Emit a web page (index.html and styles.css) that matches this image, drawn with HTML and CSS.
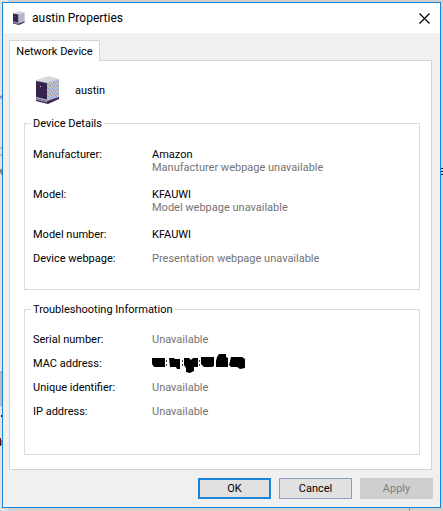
FILE: index.html
```html
<!DOCTYPE html>
<html>
<head>
	<meta charset="utf-8">
	<title>austin Properties</title>
	<link rel="stylesheet" href="styles.css">
</head>
<body>
	<!-- bits of the page behind the dialog -->
	<svg class="behind" width="3" height="511">
		<path d="M0 98h1v-2h2" fill="none" stroke="#4a62b0" />
		<path d="M0 148h2M0 155h2" stroke="#7a9cc8" />
		<path d="M0 170h3M0 172h3M1 174h2" stroke="#3a1c20" />
		<rect x="0" y="372" width="3" height="33" fill="#b8bcc4" />
		<path d="M0 372h3M0 405h3" stroke="#8098c8" />
		<path d="M1 415h1v2h-1z" fill="#1c1430" />
		<rect x="0" y="438" width="1" height="8" fill="#5a1418" />
		<rect x="1" y="440" width="1" height="5" fill="#6a90c0" />
	</svg>
	<svg class="behind behind-right" width="34" height="511">
		<path d="M32 168.500h2M32 171.500h2M32 174.500h2" stroke="#1c1420" />
		<path d="M0 508h1v3h-1z" fill="#8c9cc4" />
	</svg>
	<div class="dialog">
		<div class="titlebar">
			<svg class="small-icon" width="12" height="14" viewBox="0 0 24 28">
				<use href="#device" />
			</svg>
			<span class="title">austin Properties</span>
			<button class="close" aria-label="Close">
				<svg width="11" height="11" viewBox="0 0 11 11"><path d="M.5 .5l10 10M10.500 .5l-10 10" stroke="#000" stroke-width="1.200" /></svg>
			</button>
		</div>
		<div class="content">
			<button class="tab">Network Device</button>
			<div class="panel">
				<div class="device">
					<svg width="24" height="28" viewBox="0 0 24 28">
						<defs>
							<pattern id="mesh" width="4" height="4" patternUnits="userSpaceOnUse">
								<rect width="4" height="4" fill="#b4bcd2" />
								<path d="M0 0h1v1h-1zM2 1h1v1h-1zM1 2h1v1h-1zM3 3h1v1h-1z" fill="#8c9ccc" />
								<path d="M1 0h1v1h-1zM3 2h1v1h-1zM0 3h1v1h-1z" fill="#e8c888" />
							</pattern>
						</defs>
						<g id="device">
							<path d="M0 4L13 0L23 3V23L12 28L0 25z" fill="#d8d8dc" />
							<path d="M0 5L11 7V24L0 21z" fill="#342450" />
							<path d="M11 7L23 3V22L11 25z" fill="url(#mesh)" />
							<path d="M0 22L11 25L23 21V23L12 28L0 25z" fill="#3c2c58" />
							<path d="M0 23L11 26M2 22L11 24" stroke="#a8a4b8" fill="none" />
							<path d="M4 10h1v1h-1z" fill="#f0d8a0" />
							<path d="M2 8h1v1h-1zM6 13h1v1h-1zM3 15h1v1h-1z" fill="#801c30" />
						</g>
					</svg>
					<span>austin</span>
				</div>
				<fieldset class="details">
					<legend>Device Details</legend>
					<dl>
						<dt>Manufacturer:</dt>
						<dd class="pair">Amazon<span class="note">Manufacturer webpage unavailable</span></dd>
						<dt>Model:</dt>
						<dd class="pair">KFAUWI<span class="note">Model webpage unavailable</span></dd>
						<dt>Model number:</dt>
						<dd>KFAUWI</dd>
						<dt>Device webpage:</dt>
						<dd><span class="note">Presentation webpage unavailable</span></dd>
					</dl>
				</fieldset>
				<fieldset class="trouble">
					<legend>Troubleshooting Information</legend>
					<dl>
						<dt>Serial number:</dt>
						<dd><span class="note">Unavailable</span></dd>
						<dt>MAC address:</dt>
						<dd>
							<svg class="redacted" width="94" height="20" viewBox="0 0 94 20">
								<path d="M0 5H13V14H2L0 11zM17 5H22L23 6H28V16H25L24 14H18zM32 5H37L39 7L41 5H46V14H42V18L38 20L34 19V15L32 12zM49 4H62V13L60 14H52L49 11zM65 4L67 1H74V4L76 5V14H64V8zM79 4H90L93 6V15L88 16L85 14H79L77 12z" />
								<path d="M14 7h1v2h-1zM14 11h1v2h-1zM30 7h1v2h-1zM30 11h1v2h-1zM47 7h1v2h-1zM47 11h1v2h-1z" fill="#444a68" />
							</svg>
						</dd>
						<dt>Unique identifier:</dt>
						<dd><span class="note">Unavailable</span></dd>
						<dt>IP address:</dt>
						<dd><span class="note">Unavailable</span></dd>
					</dl>
				</fieldset>
			</div>
			<div class="buttons">
				<button class="ok">OK</button>
				<button>Cancel</button>
				<button disabled>Apply</button>
			</div>
		</div>
	</div>
</body>
</html>
```

FILE: styles.css
```css
* {
	box-sizing: border-box;
}
body {
	margin: 0;
	padding: 2px 2px 3px;
	background: linear-gradient(to right, #e2e2e2 8px, #d0d0ce 8px);
	font-family: Roboto, Tahoma, sans-serif;
	font-size: 11px;
	line-height: 13px;
	color: #000;
}
button {
	font: inherit;
	color: inherit;
	padding: 0;
}
.behind {
	position: absolute;
	top: 0;
	left: 0;
}
.behind-right {
	left: auto;
	right: 0;
}
.dialog {
	position: relative;
	border: 1px solid #1b83d8;
	background-color: #f0f0f0;
}
.titlebar {
	display: flex;
	align-items: center;
	height: 30px;
	padding: 0 10px;
	background-color: #fff;
}
.title {
	flex: 1;
	margin-left: 7px;
	font-size: 12px;
}
.close {
	display: flex;
	border: 0;
	background: none;
}
.content {
	padding: 7px 7px 8px 6px;
}
.tab {
	display: block;
	position: relative;
	width: 91px;
	height: 21px;
	margin-bottom: -1px;
	border: 1px solid #d4d4d4;
	border-bottom: 0;
	background-color: #fff;
}
.panel {
	margin-right: 1px;
	padding: 14px 11px 14px 14px;
	border: 1px solid #d4d4d4;
	background-color: #fff;
}
.device {
	display: flex;
	align-items: center;
	gap: 15px;
	height: 30px;
	margin: 0 0 12px 12px;
}
fieldset {
	margin: 0;
	padding: 0 8px;
	border: 1px solid #dcdcdc;
}
legend {
	padding: 0 2px;
	margin-left: -2px;
}
dl {
	display: grid;
	grid-template-columns: 119px 1fr;
	row-gap: 11px;
	margin: 0;
}
dd {
	margin: 0;
}
.pair {
	margin-bottom: 3px;
}
.details {
	margin-bottom: 13px;
	padding-bottom: 24px;
}
.details dl {
	padding-top: 18px;
}
.trouble {
	padding-bottom: 36px;
}
.trouble dl {
	padding-top: 17px;
}
.note {
	display: block;
	color: #747474;
}
.redacted {
	display: block;
	margin: -4px 0 -3px;
}
.buttons {
	display: flex;
	justify-content: flex-end;
	gap: 8px;
	margin-top: 8px;
}
.buttons button {
	width: 73px;
	height: 21px;
	border: 1px solid #8c9cc4;
	background-color: #e1e1e1;
}
.buttons .ok {
	border: 2px solid #1b83d8;
}
.buttons button:disabled {
	border-color: #cfcfcf;
	background-color: #cfcfcf;
	color: #808080;
}
```
